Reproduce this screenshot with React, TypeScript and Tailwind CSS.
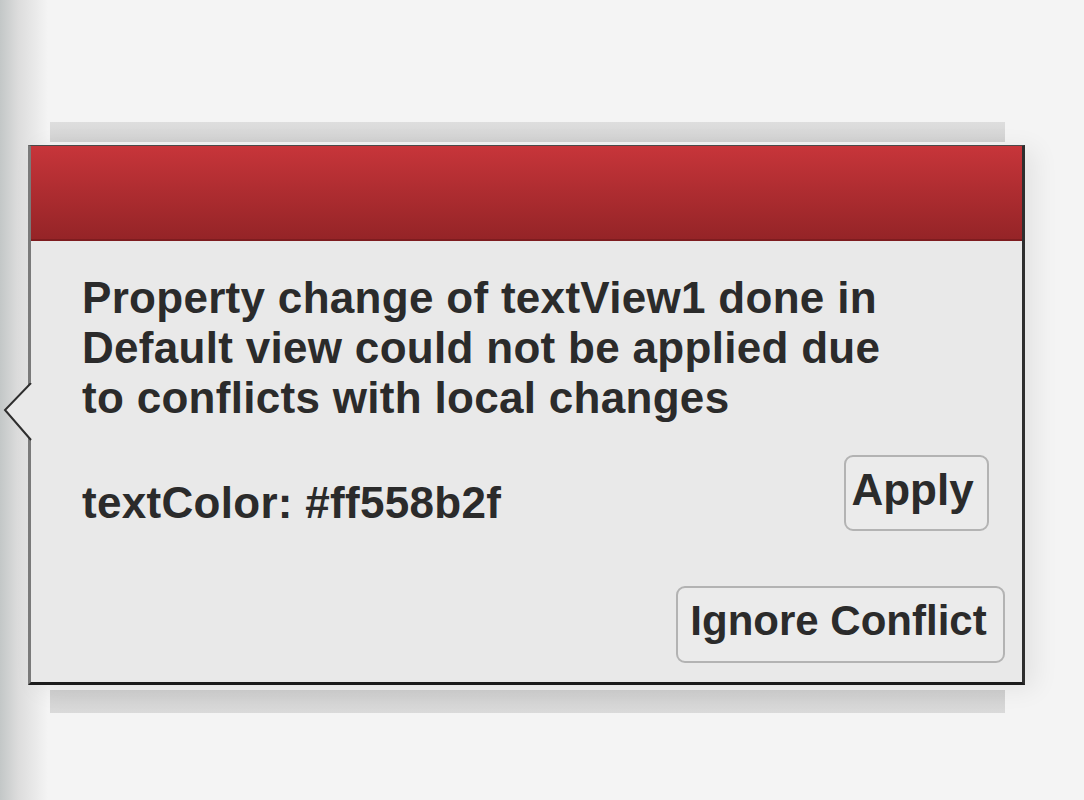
const ConflictPopup = () => {
  return (
    <div className="relative ml-[28px] flex h-[540px] w-[997px] flex-col border-b-[3px] border-l-[3px] border-r-[3px] border-t border-b-[#1c1c1c] border-l-[#7a7a7a] border-r-[#2e2e2e] border-t-[#4a4a4a] bg-[#e9e9e9] shadow-[10px_4px_24px_rgba(0,0,0,0.07)]">
      {/* pointer on the left edge */}
      <svg
        className="absolute left-[-28px] top-[237px]"
        width="32"
        height="60"
        viewBox="0 0 32 60"
      >
        <polygon points="28,0 2,27 28,57 32,57 32,0" fill="#e9e9e9" />
        <polyline points="28,0 2,27 28,57" fill="none" stroke="#2e2e2e" strokeWidth="2" />
      </svg>

      <div className="h-[95px] border-b-2 border-b-[#7e1c1f] bg-gradient-to-b from-[#c7353a] to-[#952427]" />

      <div className="flex flex-1 flex-col pl-[51px] pr-[17px] pt-[32px] text-[#2b2b2b]">
        <p className="text-[44px] font-bold leading-[50px] tracking-[0.3px]">
          Property change of textView1 done in
          <br />
          Default view could not be applied due
          <br />
          to conflicts with local changes
        </p>

        <div className="mt-[32px] flex items-start justify-between pr-[16px]">
          <span className="mt-[23px] text-[44px] font-bold leading-[50px] tracking-[0.3px]">
            textColor: #ff558b2f
          </span>
          <button className="h-[76px] w-[145px] rounded-[9px] border-2 border-[#b3b3b3] bg-[#ebebeb] pb-[14px] pr-[8px] pt-[8px] text-center text-[44px] font-bold leading-[50px] text-[#2b2b2b]">
            Apply
          </button>
        </div>

        <div className="mt-[55px] flex justify-end">
          <button className="h-[77px] w-[329px] rounded-[9px] border-2 border-[#b3b3b3] bg-[#ebebeb] pb-[15px] pr-[4px] pt-[8px] text-center text-[42px] font-bold leading-[50px] text-[#2b2b2b]">
            Ignore Conflict
          </button>
        </div>
      </div>
    </div>
  );
};

const App = () => {
  return (
    <div
      className="h-[800px] w-full overflow-hidden bg-[#f4f4f4] bg-[linear-gradient(to_right,#c3c7c7,#dcdcdc_18px,#f4f4f4_48px)]"
      style={{ fontFamily: '"Liberation Sans", Arial, sans-serif' }}
    >
      <div className="flex flex-col pt-[122px]">
        <div className="ml-[50px] h-[20px] w-[955px] bg-gradient-to-b from-[#dedede] to-[#d2d2d2]" />
        <div className="h-[3px]" />
        <ConflictPopup />
        <div className="ml-[50px] mt-[5px] h-[23px] w-[955px] bg-gradient-to-b from-[#cfcfcf] to-[#dadada]" />
      </div>
    </div>
  );
};

export default App;
